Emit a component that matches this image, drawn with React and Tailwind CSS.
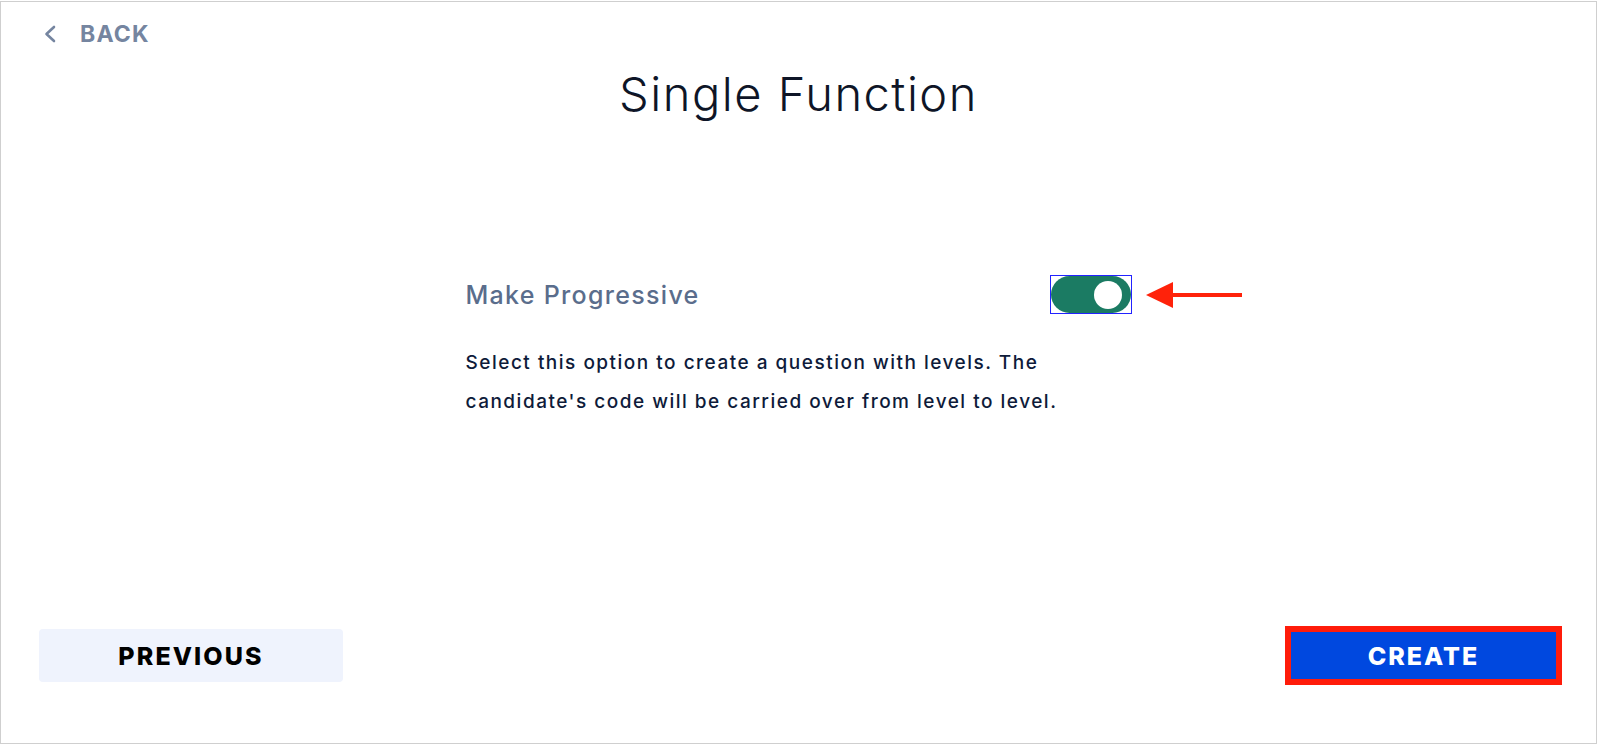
import React from "react";

const font = { fontFamily: "Inter, 'Noto Sans', 'Liberation Sans', sans-serif" };

function BackChevron() {
  return (
    <svg width="14" height="18" viewBox="0 0 14 18" fill="none">
      <polyline
        points="11,2 3.5,9 11,16"
        stroke="#7585a0"
        strokeWidth="2.6"
        strokeLinecap="round"
        strokeLinejoin="round"
      />
    </svg>
  );
}

function PointerArrow() {
  return (
    <svg width="96" height="28" viewBox="0 0 96 28">
      <polygon points="0,14 27,1 27,27" fill="#ff220a" />
      <rect x="24" y="12" width="72" height="4" fill="#ff220a" />
    </svg>
  );
}

function Toggle() {
  return (
    <div className="relative">
      <div className="border border-[#2222ff]">
        <div className="w-[80px] h-[37px] rounded-full bg-[#1b7b63] flex items-center justify-end pr-[9px]">
          <div className="w-[28px] h-[28px] rounded-full bg-white" />
        </div>
      </div>
      <div className="absolute left-[96px] top-[6px]">
        <PointerArrow />
      </div>
    </div>
  );
}

export default function App() {
  return (
    <div className="w-[1600px] h-[745px] bg-white pt-px" style={font}>
      <div className="relative w-[1597px] h-[743px] border border-[#cfcfcf] flex flex-col">
        <div className="flex items-center pl-[42px] pt-[22px] gap-[23px]">
          <BackChevron />
          <span className="text-[23px] leading-[20px] font-bold text-[#7585a0] tracking-[1.2px]">
            BACK
          </span>
        </div>

        <h1 className="mt-[22px] text-center text-[47px] leading-[56px] font-light text-[#0e1527] tracking-[1.5px]">
          Single Function
        </h1>

        <div className="mx-auto w-[666px] mt-[153px]">
          <div className="flex items-center justify-between">
            <span className="text-[25px] leading-[30px] font-medium text-[#5a6d8c] tracking-[1.3px]">
              Make Progressive
            </span>
            <Toggle />
          </div>
          <p className="mt-[29px] text-[19px] leading-[39px] font-medium text-[#0e1b3a] tracking-[1.5px]">
            Select this option to create a question with levels. The
            <br />
            candidate's code will be carried over from level to level.
          </p>
        </div>

        <div className="mt-auto flex items-center justify-between pl-[38px] pr-[34px] pb-[58px]">
          <button className="w-[304px] h-[53px] rounded-[4px] bg-[#eff3fd] pt-[3px] text-[25px] font-extrabold text-black tracking-[2.1px]">
            PREVIOUS
          </button>
          <div className="border-[6px] border-[#ff1c0a]">
            <button className="block w-[265px] h-[47px] bg-[#0048df] pt-[3px] text-[25px] font-extrabold text-white tracking-[2px]">
              CREATE
            </button>
          </div>
        </div>
      </div>
    </div>
  );
}
